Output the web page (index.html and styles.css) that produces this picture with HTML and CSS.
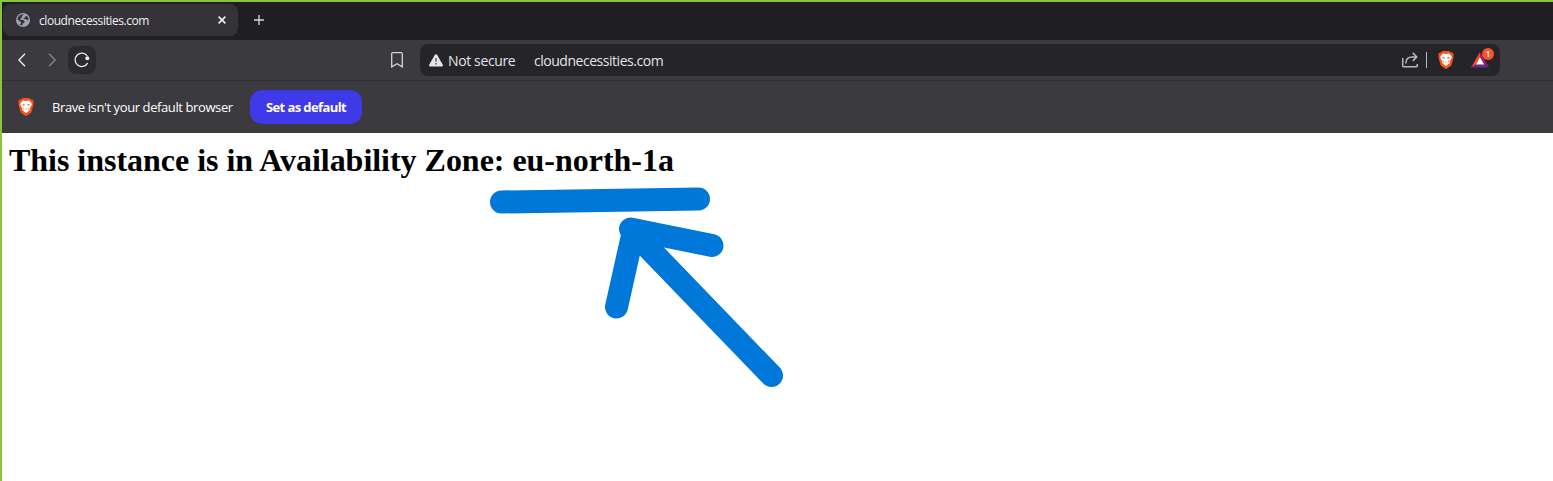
FILE: index.html
```html
<!DOCTYPE html>
<html lang="en">
<head>
<meta charset="utf-8">
<title>cloudnecessities.com</title>
<link rel="stylesheet" href="styles.css">
</head>
<body>
<svg class="defs" aria-hidden="true">
  <symbol id="lion" viewBox="0 0 16 18">
    <path fill="#fb4f1c" d="M4.6 0h6.8l1.5 1.6 1.5-.2 1.4 2-.6 1.5.4 1.4-2 7.2c-.3 1-.8 1.6-1.6 2.1L8.7 17.8a1.2 1.2 0 0 1-1.4 0L4 15.6c-.8-.5-1.3-1.100-1.600-2.100L.4 6.300l.4-1.400L.2 3.400l1.400-2 1.500.2z"/>
    <path fill="#fff" d="M5 2.500 8 3l3-.5 1.800 1.800 1 1.700-.7 2.300-1.500 2.300.3 1.300-1.500 1.200-.7 1L8 15l-1.700-.9-.7-1-1.500-1.200.3-1.300-1.500-2.300L2.200 6l1-1.700z"/>
    <path fill="#fb4f1c" d="m4.200 6 2.600.6-.3 1-1.300-.2zM11.800 6l-2.600.6.3 1 1.300-.2zM6.400 10.300l1.600.6 1.600-.6-1.600 1.500zM5.500 8.900l.8 3.200-.9-.5zM10.500 8.900l-.8 3.200.9-.5z"/>
  </symbol>
</svg>
<div class="window">
  <div class="tabstrip">
    <div class="tab">
      <svg class="globe" viewBox="0 0 14 14"><circle cx="7" cy="7" r="7" fill="#9fa3aa"/><path fill="#343338" d="M7.800 1.300 5.700 3.400l.2 1.300-1.300.5-.3 1.500 3 .2 1.500 1.500-.8 1.500-1.400.6-.2 2.200a5.600 5.600 0 0 1-3.200-1.700l1.500-.1.300-1.800L1.400 6.600A5.700 5.700 0 0 1 7.800 1.300z"/><path fill="#343338" d="m9.300 3.100 1.900.1a5.600 5.600 0 0 1 1.400 3.300l-1.500.8-1.200-1.200-2 .1-.5-1.300 1.900-.3z"/></svg>
      <span class="tab-title">cloudnecessities.com</span>
      <svg class="close" viewBox="0 0 8 8"><path d="m.6.600 6.800 6.800m0-6.800L.6 7.400"/></svg>
    </div>
    <svg class="plus" viewBox="0 0 10 10"><path d="M5 0v10M0 5h10"/></svg>
  </div>
  <div class="toolbar">
    <svg class="chevron" viewBox="0 0 8 14"><path d="M7 .7.900 7 7 13.300"/></svg>
    <svg class="chevron forward" viewBox="0 0 8 14"><path d="M1 .7 7.100 7 1 13.300"/></svg>
    <div class="reload"><svg viewBox="0 0 16 16"><path d="M13.600 11.200A6.700 6.700 0 1 1 13.300 4"/><circle cx="13.300" cy="6.200" r="2"/></svg></div>
    <svg class="bookmark" viewBox="0 0 12 16"><path d="M.7 1.900C.7 1.200 1.200.7 1.900.7h8.200c.7 0 1.200.5 1.200 1.200v13L6 11.800.7 14.900z"/></svg>
    <div class="address">
      <svg class="warn" viewBox="0 0 14 13"><path fill="#e4e3e8" d="M5.900.8a1.300 1.300 0 0 1 2.200 0l5.700 9.900c.5.900-.1 1.900-1.100 1.900H1.300c-1 0-1.600-1-1.100-1.900z"/><path stroke="#55545a" stroke-width="1.400" d="M7 4v3.800M7 9v1.500"/></svg>
      <span class="security">Not secure</span>
      <span class="url">cloudnecessities.com</span>
      <svg class="share" viewBox="0 0 16 16"><path d="M.7 6v7.600c0 .7.400 1.100 1.100 1.100h12.400c.7 0 1.100-.4 1.100-1.100V12M3.800 11.500c0-4.200 2.500-6.600 6.500-6.600h4M10.800.900l4 4-4 4"/></svg>
      <span class="divider"></span>
      <svg class="lion shield"><use href="#lion"/></svg>
      <div class="rewards">
        <svg viewBox="0 0 18 16"><path fill="#ff4724" d="M9 0v5.200L4.800 12.500 0 15.500z"/><path fill="#9e1f63" d="m9 0 9 15.500-4.800-3L9 5.200z"/><path fill="#662d91" d="M0 15.500h18l-4.800-3H4.800z"/><path fill="#fff" d="m9 5.200 4.200 7.300H4.800z"/></svg>
        <span class="badge">1</span>
      </div>
    </div>
  </div>
  <div class="infobar">
    <svg class="lion"><use href="#lion"/></svg>
    <span class="message">Brave isn't your default browser</span>
    <button class="set-default">Set as default</button>
  </div>
  <main class="page">
    <h1 class="heading">This instance is in Availability Zone: eu-north-1a</h1>
  </main>
  <svg class="marker" viewBox="0 0 300 210"><path d="M16.500 22 213.500 19M145.500 49l81.500 16.500M148.500 51l-17 76M147 51l139.500 144.500"/></svg>
</div>
</body>
</html>
```

FILE: styles.css
```css
* { box-sizing: border-box; }
body { margin: 0; overflow: hidden; background: #fff; font-family: "Open Sans", "Noto Sans", sans-serif; }
svg { display: block; flex: none; fill: none; }
span { white-space: nowrap; }
.defs { display: none; }
.window { position: relative; height: 481px; border-top: 2px solid #8bc53f; border-left: 2px solid #8bc53f; }
.tabstrip { display: flex; align-items: center; height: 38px; background: #1f1e23; padding: 0 0 4px 1px; }
.tab { display: flex; align-items: center; width: 235px; height: 32px; margin-top: 2px; padding: 0 12px 0 13px; border-radius: 8px; background: #343338; }
.globe { width: 14px; height: 14px; }
.tab-title { margin-left: 9px; font-size: 12px; font-weight: 500; letter-spacing: -0.44px; color: #f0f0f2; }
.close { width: 8px; height: 8px; margin-left: auto; stroke: #eeeef0; stroke-width: 1.6; }
.plus { width: 10px; height: 10px; margin: 2px 0 0 16px; stroke: #d8d8dc; stroke-width: 1.3; }
.toolbar { display: flex; align-items: center; height: 40px; background: #3b3a3f; padding-left: 16px; }
.chevron { width: 8px; height: 14px; stroke: #eeeef0; stroke-width: 1.4; }
.forward { margin-left: 22px; stroke: #85848a; }
.reload { display: grid; place-items: center; width: 28px; height: 28px; margin-left: 12px; border-radius: 8px; background: #2b2a2d; }
.reload svg { width: 16px; height: 16px; stroke: #eeeef0; stroke-width: 1.3; }
.reload circle { fill: #eeeef0; stroke: none; }
.bookmark { width: 12px; height: 16px; margin-left: 295px; stroke: #d5d4d8; stroke-width: 1.3; }
.address { display: flex; align-items: center; width: 1080px; height: 32px; margin-left: 17px; padding: 0 11px 0 9px; border-radius: 8px; background: #252429; color: #e4e3e8; font-size: 14px; }
.warn { width: 14px; height: 13px; }
.security { width: 68px; margin-left: 5px; letter-spacing: -0.37px; }
.url { margin-left: 18px; letter-spacing: -0.47px; }
.share { width: 16px; height: 16px; margin-left: auto; stroke: #b8b7bc; stroke-width: 1.5; }
.divider { width: 1px; height: 16px; margin-left: 8px; background: #b8b7bc; }
.lion { width: 16px; height: 18px; }
.shield { margin-left: 11px; }
.rewards { position: relative; width: 18px; margin-left: 17px; }
.rewards svg { width: 18px; height: 16px; }
.badge { position: absolute; left: 11px; top: -4px; width: 12px; height: 12px; border-radius: 50%; background: #fb542b; color: #fff; font-size: 8px; font-weight: 600; line-height: 12px; text-align: center; }
.infobar { display: flex; align-items: center; height: 53px; padding-left: 16px; border-top: 1px solid #302f33; background: #3b3a3f; color: #fff; font-size: 13px; }
.message { width: 182px; margin-left: 18px; letter-spacing: -0.4px; }
.set-default { width: 112px; height: 34px; margin-left: 16px; padding: 0; border: 0; border-radius: 12px; background: #3f39e8; color: #fff; font: 700 13px "Open Sans", sans-serif; letter-spacing: -0.6px; white-space: nowrap; }
.page { padding: 9px 7px; }
.heading { margin: 0; font: bold 32px/37px "Liberation Serif", serif; letter-spacing: -0.025px; color: #000; }
.marker { position: absolute; left: 483px; top: 178px; width: 300px; height: 210px; stroke: #0078d9; stroke-width: 23; stroke-linecap: round; }
```
